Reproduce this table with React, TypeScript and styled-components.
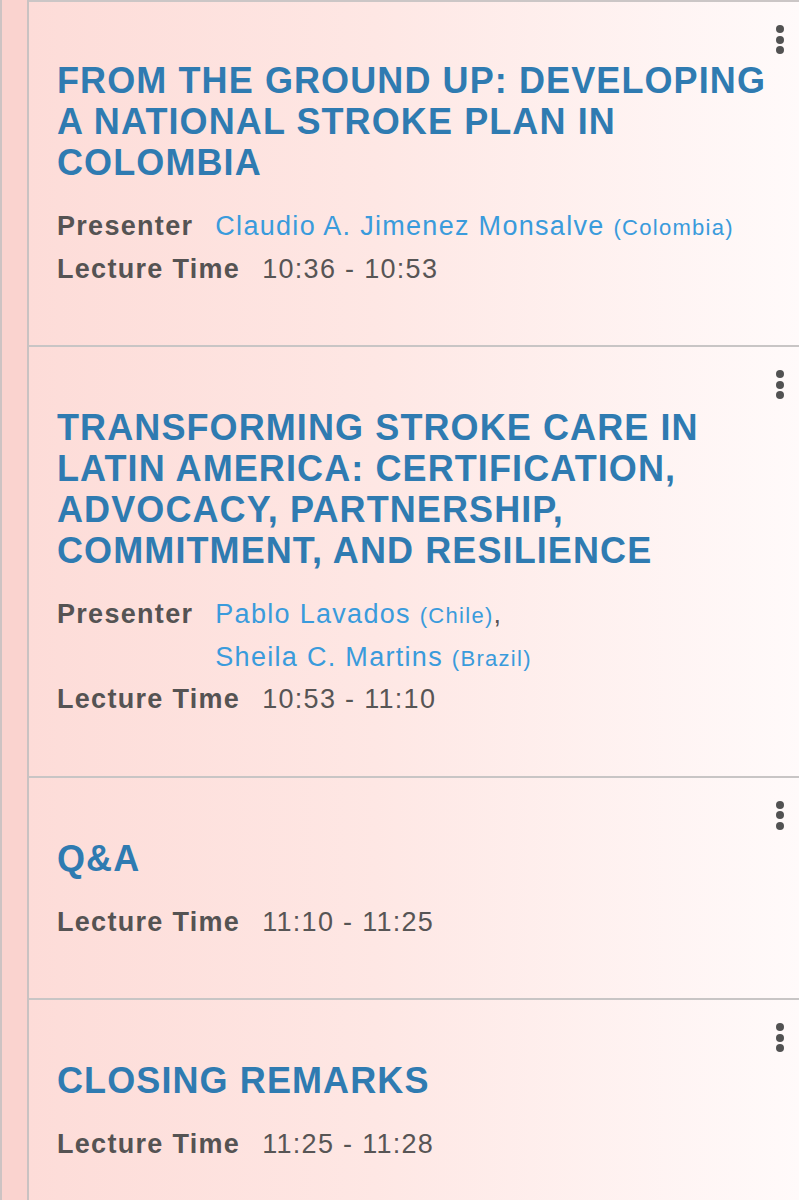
import styled, { createGlobalStyle } from 'styled-components';

const GlobalStyle = createGlobalStyle`
  html, body {
    margin: 0;
    padding: 0;
    background: #ffffff;
  }
  body {
    font-family: "Liberation Sans", Arial, sans-serif;
  }
`;

const Page = styled.div`
  display: flex;
  width: 799px;
  min-height: 1200px;
  background: #fad4d0;
  border-left: 2px solid #cdc3c3;
  box-sizing: border-box;
`;

const SideStrip = styled.div`
  width: 25px;
  flex: none;
  background: #fad3cf;
  border-right: 2px solid #c9c2c2;
`;

const List = styled.div`
  flex: 1;
  display: flex;
  flex-direction: column;
  border-top: 2px solid #cbc6c6;
`;

const Card = styled.div<{ $last?: boolean }>`
  position: relative;
  padding: 60px 20px 55px 28px;
  background: linear-gradient(to right, #fddcd8 0%, #fee7e4 45%, #fffafa 100%);
  border-bottom: ${(p) => (p.$last ? 'none' : '2px solid #c8c5c5')};
  flex: ${(p) => (p.$last ? '1' : 'none')};

  &:first-child {
    padding-top: 58px;
  }
`;

const Kebab = styled.div`
  position: absolute;
  top: 23px;
  right: 15px;
  display: flex;
  flex-direction: column;
  gap: 2.5px;

  span {
    display: block;
    width: 8px;
    height: 8px;
    border-radius: 50%;
    background: #525252;
  }
`;

const Title = styled.h2`
  margin: 0 0 23px;
  font-size: 36px;
  line-height: 41px;
  font-weight: 700;
  color: #2f7bb1;
  letter-spacing: 1.1px;
`;

const Row = styled.div`
  display: flex;
  align-items: flex-start;
  font-size: 27px;
  line-height: 41.5px;
  letter-spacing: 1.3px;
`;

const Label = styled.span`
  font-weight: 700;
  color: #555353;
  margin-right: 22px;
  white-space: nowrap;
`;

const Value = styled.span`
  color: #575555;
`;

const Names = styled.div`
  display: flex;
  flex-direction: column;
`;

const Name = styled.span`
  color: #3a9bdc;
`;

const Country = styled.small`
  font-size: 22px;
`;

const Comma = styled.span`
  color: #555353;
`;

type Presenter = { name: string; country: string };

type Lecture = {
  title: string;
  presenters?: Presenter[];
  time: string;
};

const lectures: Lecture[] = [
  {
    title: 'FROM THE GROUND UP: DEVELOPING A NATIONAL STROKE PLAN IN COLOMBIA',
    presenters: [{ name: 'Claudio A. Jimenez Monsalve', country: 'Colombia' }],
    time: '10:36 - 10:53',
  },
  {
    title:
      'TRANSFORMING STROKE CARE IN LATIN AMERICA: CERTIFICATION, ADVOCACY, PARTNERSHIP, COMMITMENT, AND RESILIENCE',
    presenters: [
      { name: 'Pablo Lavados', country: 'Chile' },
      { name: 'Sheila C. Martins', country: 'Brazil' },
    ],
    time: '10:53 - 11:10',
  },
  { title: 'Q&A', time: '11:10 - 11:25' },
  { title: 'CLOSING REMARKS', time: '11:25 - 11:28' },
];

const LectureCard = ({ lecture, last }: { lecture: Lecture; last: boolean }) => (
  <Card $last={last}>
    <Kebab>
      <span />
      <span />
      <span />
    </Kebab>
    <Title>{lecture.title}</Title>
    {lecture.presenters && (
      <Row>
        <Label>Presenter</Label>
        <Names>
          {lecture.presenters.map((p, i) => (
            <span key={p.name}>
              <Name>
                {p.name} <Country>({p.country})</Country>
              </Name>
              {i < lecture.presenters!.length - 1 && <Comma>,</Comma>}
            </span>
          ))}
        </Names>
      </Row>
    )}
    <Row>
      <Label>Lecture Time</Label>
      <Value>{lecture.time}</Value>
    </Row>
  </Card>
);

const App = () => (
  <>
    <GlobalStyle />
    <Page>
      <SideStrip />
      <List>
        {lectures.map((l, i) => (
          <LectureCard key={l.title} lecture={l} last={i === lectures.length - 1} />
        ))}
      </List>
    </Page>
  </>
);

export default App;
